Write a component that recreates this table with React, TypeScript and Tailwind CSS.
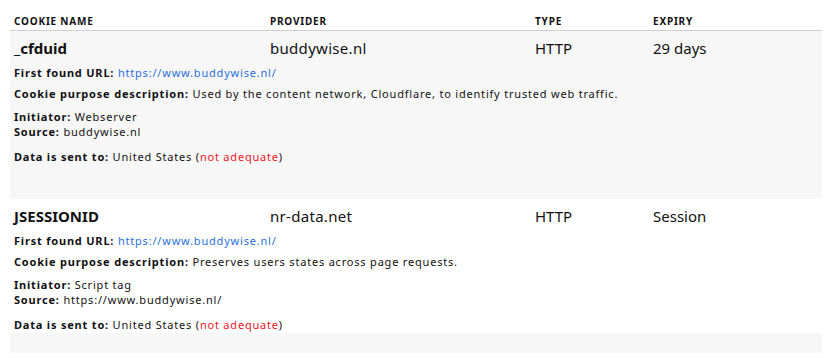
import React from "react";

type Cookie = {
  name: string;
  provider: string;
  type: string;
  expiry: string;
  purpose: string;
  initiator: string;
  source: string;
  extra: string;
};

const cookies: Cookie[] = [
  {
    name: "_cfduid",
    provider: "buddywise.nl",
    type: "HTTP",
    expiry: "29 days",
    purpose: "Used by the content network, Cloudflare, to identify trusted web traffic.",
    initiator: "Webserver",
    source: "buddywise.nl",
    extra: "pb-[35px]",
  },
  {
    name: "JSESSIONID",
    provider: "nr-data.net",
    type: "HTTP",
    expiry: "Session",
    purpose: "Preserves users states across page requests.",
    initiator: "Script tag",
    source: "https://www.buddywise.nl/",
    extra: "pb-[1px]",
  },
];

const cols = "grid grid-cols-[256px_265px_118px_1fr]";

function Row({ c, gray }: { c: Cookie; gray: boolean }) {
  return (
    <div className={`${gray ? "bg-[#f7f7f7]" : "bg-white"} px-1 ${c.extra}`}>
      <div className={`${cols} h-[32px] pt-[1px] items-center text-[15px] leading-[20px] text-[#111]`}>
        <div className="font-bold">{c.name}</div>
        <div className="tracking-[0.3px]">{c.provider}</div>
        <div>{c.type}</div>
        <div>{c.expiry}</div>
      </div>
      <div className="text-[11px] leading-[15px] tracking-[0.8px] text-[#111]">
        <p className="mt-[2px]">
          <b>First found URL:</b> <span className="text-[#2a6fdb]">https://www.buddywise.nl/</span>
        </p>
        <p className="mt-[6px]">
          <b>Cookie purpose description:</b> {c.purpose}
        </p>
        <p className="mt-[8px]">
          <b>Initiator:</b> {c.initiator}
        </p>
        <p>
          <b>Source:</b> {c.source}
        </p>
        <p className="mt-[10px]">
          <b>Data is sent to:</b> United States (<span className="text-[#f0141e]">not adequate</span>)
        </p>
      </div>
    </div>
  );
}

export default function App() {
  return (
    <div className="w-[832px] h-[359px] bg-white overflow-hidden" style={{ fontFamily: '"Noto Sans", "Open Sans", sans-serif' }}>
      <div className="mx-[10px] pt-[13px]">
        <div className={`${cols} px-1 h-[18px] items-center border-b border-[#cfcfcf] text-[10px] font-bold tracking-[0.8px] text-[#111]`}>
          <div>COOKIE NAME</div>
          <div>PROVIDER</div>
          <div>TYPE</div>
          <div>EXPIRY</div>
        </div>
        {cookies.map((c, i) => (
          <Row key={c.name} c={c} gray={i % 2 === 0} />
        ))}
        <div className="h-[20px] bg-[#f7f7f7]" />
      </div>
    </div>
  );
}
